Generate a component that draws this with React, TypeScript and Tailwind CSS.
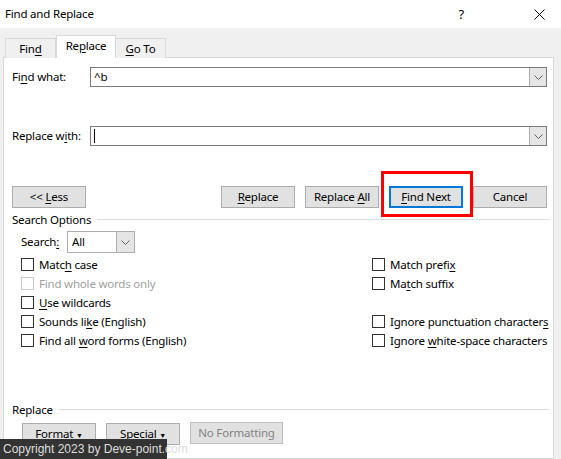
import type { ReactNode } from 'react'

const font = { fontFamily: '"Noto Sans", "Segoe UI", sans-serif' }

function Chevron({ color = '#606060' }: { color?: string }) {
  return (
    <svg width="9" height="5" viewBox="0 0 9 5" fill="none">
      <path d="M0.5 0.5 L4.5 4.5 L8.5 0.5" stroke={color} strokeWidth="1" />
    </svg>
  )
}

function Combo({ value, caret }: { value?: string; caret?: boolean }) {
  return (
    <div className="flex h-[20px] w-[457px] border border-[#7a7a7a] bg-white">
      <div className="flex flex-1 items-center pl-[3px] text-black">
        {caret && <span className="h-[14px] w-px bg-black" />}
        {value && <span className="whitespace-pre">{value}</span>}
      </div>
      <div className="flex w-[17px] items-center justify-center border-l border-[#adadad] bg-[#e5e5e5]">
        <Chevron />
      </div>
    </div>
  )
}

function Btn({ children, primary, disabled, className = '' }: { children: ReactNode; primary?: boolean; disabled?: boolean; className?: string }) {
  return (
    <div
      className={`flex h-[22px] w-[74px] items-center justify-center bg-[#e1e1e1] ${
        primary ? 'border-2 border-[#0078d7]' : 'border border-[#adadad]'
      } ${disabled ? 'border-[#bfbfbf] text-[#838383]' : 'text-black'} ${className}`}
    >
      <span className="whitespace-pre">{children}</span>
    </div>
  )
}

function Check({ children, disabled }: { children: ReactNode; disabled?: boolean }) {
  return (
    <div className="flex h-[19px] items-center">
      <span className={`h-[13px] w-[13px] shrink-0 border bg-white ${disabled ? 'border-[#cccccc]' : 'border-[#333333]'}`} />
      <span className={`ml-[5px] whitespace-nowrap ${disabled ? 'text-[#a0a0a0]' : 'text-black'}`}>{children}</span>
    </div>
  )
}

function Section({ title }: { title: string }) {
  return (
    <div className="flex h-[15px] items-center pl-[8px] pr-[4px]">
      <span className="text-black">{title}</span>
      <span className="ml-[6px] h-px flex-1 bg-[#dcdcdc]" />
    </div>
  )
}

const U = ({ children }: { children: ReactNode }) => <span className="underline underline-offset-2">{children}</span>

export default function App() {
  return (
    <div
      className="relative h-[459px] w-[561px] overflow-hidden bg-[#f0f0f0] text-[11.5px] leading-none tracking-[-0.2px]"
      style={font}
    >
      <div className="flex h-[28px] items-center bg-white pl-[5px] text-black">
        <span>Find and Replace</span>
        <span className="ml-auto mr-[70px] text-[13px]">?</span>
        <svg className="mr-[16px]" width="11" height="11" viewBox="0 0 11 11">
          <path d="M0.5 0.5 L10.5 10.5 M10.5 0.5 L0.5 10.5" stroke="#000" strokeWidth="1" />
        </svg>
      </div>

      <div className="flex h-[29px] items-end pl-[5px] text-black">
        <div className="-mb-px flex h-[20px] w-[51px] items-center justify-center border border-b-0 border-[#d9d9d9] bg-[#f0f0f0]">
          <span>Fin<U>d</U></span>
        </div>
        <div className="relative z-10 -mb-px flex h-[23px] w-[60px] items-center justify-center border border-b-0 border-[#d9d9d9] bg-white pb-[3px]">
          <span>Re<U>p</U>lace</span>
        </div>
        <div className="-mb-px flex h-[20px] w-[50px] items-center justify-center border border-b-0 border-l-0 border-[#d9d9d9] bg-[#f0f0f0]">
          <span><U>G</U>o To</span>
        </div>
      </div>

      <div className="ml-[3px] h-[402px] w-[551px] border border-[#d9d9d9] bg-white text-black">
        <div className="mt-[9px] flex items-center pl-[8px]">
          <span className="w-[78px]">Fi<U>n</U>d what:</span>
          <Combo value="^b" />
        </div>
        <div className="mt-[39px] flex items-center pl-[8px]">
          <span className="w-[78px]">Replace w<U>i</U>th:</span>
          <Combo caret />
        </div>

        <div className="mt-[40px] flex items-center pl-[8px]">
          <Btn>&lt;&lt; <U>L</U>ess</Btn>
          <div className="ml-auto mr-[6px] flex gap-[10px]">
            <Btn><U>R</U>eplace</Btn>
            <Btn>Replace <U>A</U>ll</Btn>
            <div className="relative">
              <Btn primary><U>F</U>ind Next</Btn>
              <div className="absolute -left-[8px] -top-[15px] h-[46px] w-[92px] border-[3px] border-[#ff0000]" />
            </div>
            <Btn>Cancel</Btn>
          </div>
        </div>

        <div className="mt-[4px]">
          <Section title="Search Options" />
        </div>

        <div className="mt-[4px] flex items-center pl-[17px]">
          <span className="w-[46px]">Search<U>:</U></span>
          <div className="flex h-[22px] w-[68px] border border-[#adadad] bg-white">
            <span className="flex flex-1 items-center pl-[4px]">All</span>
            <span className="flex w-[18px] items-center justify-center border-l border-[#adadad] bg-[#e5e5e5]">
              <Chevron />
            </span>
          </div>
        </div>

        <div className="mt-[2px] grid grid-cols-[351px_1fr] pl-[17px]">
          <div>
            <Check>Matc<U>h</U> case</Check>
            <Check disabled>Find whole words only</Check>
            <Check><U>U</U>se wildcards</Check>
            <Check>Sounds li<U>k</U>e (English)</Check>
            <Check>Find all <U>w</U>ord forms (English)</Check>
          </div>
          <div>
            <Check>Match prefi<U>x</U></Check>
            <Check>Ma<U>t</U>ch suffix</Check>
            <div className="h-[19px]" />
            <Check>Ignore punctuation character<U>s</U></Check>
            <Check>Ignore <U>w</U>hite-space characters</Check>
          </div>
        </div>

        <div className="mt-[52px]">
          <Section title="Replace" />
        </div>

        <div className="mt-[6px] flex gap-[10px] pl-[18px]">
          <Btn>
            F<U>o</U>rmat <span className="text-[7px]">▼</span>
          </Btn>
          <Btn>
            Sp<U>e</U>cial <span className="text-[7px]">▼</span>
          </Btn>
          <Btn disabled className="-mt-px w-[93px]">No Formatting</Btn>
        </div>
      </div>

      <div
        className="absolute bottom-0 left-0 flex h-[20px] w-[167px] items-center whitespace-nowrap bg-[#333333] pl-[3px] text-[12px] tracking-normal text-[#dddddd]"
        style={{ fontFamily: '"Liberation Sans", Arial, sans-serif' }}
      >
        Copyright 2023 by Deve-point.com
      </div>
    </div>
  )
}
